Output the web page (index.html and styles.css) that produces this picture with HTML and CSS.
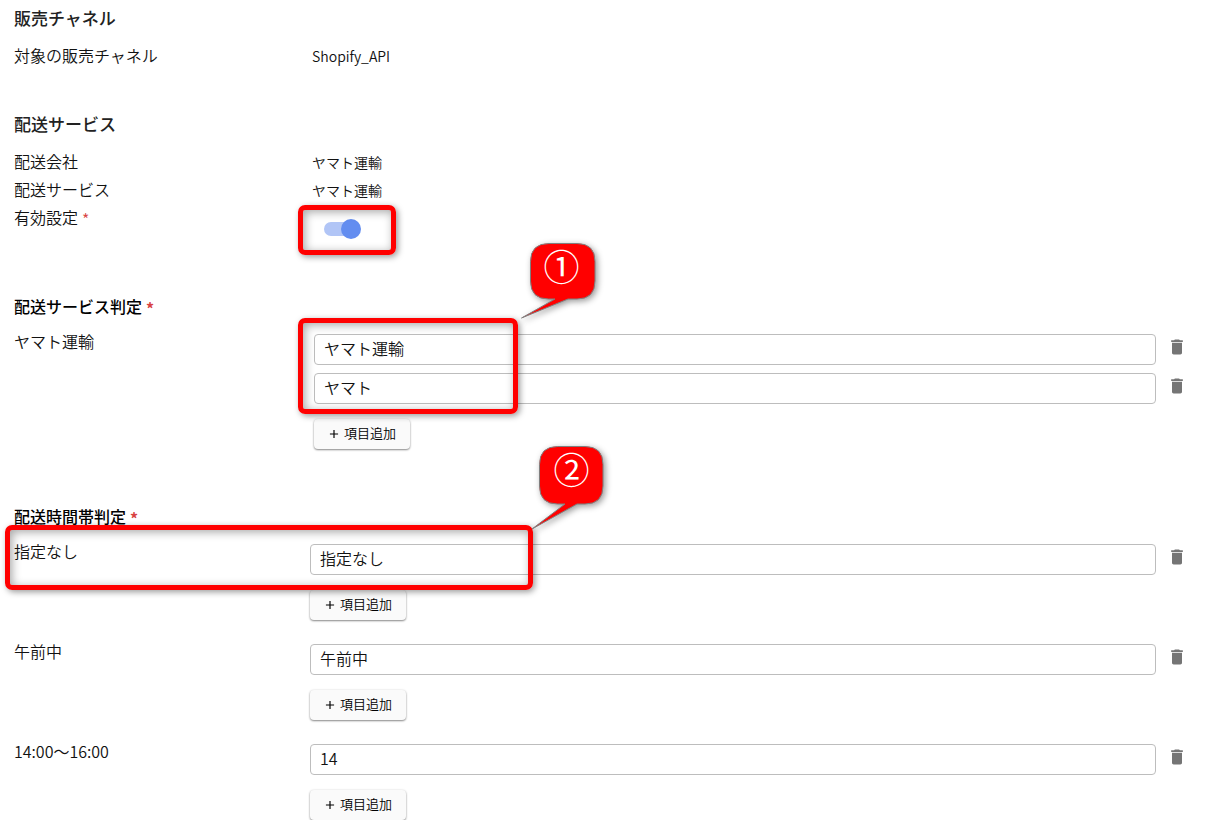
FILE: index.html
```html
<!DOCTYPE html>
<html lang="ja">
<head>
  <meta charset="UTF-8">
  <meta name="viewport" content="width=device-width, initial-scale=1.0">
  <title>配送サービス</title>
  <link rel="stylesheet" href="styles.css">
</head>
<body>
  <!-- Shared icons -->
  <svg class="sprite" aria-hidden="true">
    <symbol id="icon-delete" viewBox="0 0 24 24">
      <path d="M6 19c0 1.1.9 2 2 2h8c1.1 0 2-.9 2-2V7H6v12zM19 4h-3.5l-1-1h-5l-1 1H5v2h14V4z"/>
    </symbol>
    <symbol id="icon-add" viewBox="0 0 24 24">
      <path d="M19 13h-6v6h-2v-6H5v-2h6V5h2v6h6v2z"/>
    </symbol>
  </svg>

  <form class="settings">
    <section class="section">
      <h2>販売チャネル</h2>
      <div class="row">
        <span class="label">対象の販売チャネル</span>
        <span class="value">Shopify_API</span>
      </div>
    </section>

    <section class="section">
      <h2>配送サービス</h2>
      <div class="row">
        <span class="label">配送会社</span>
        <span class="value">ヤマト運輸</span>
      </div>
      <div class="row">
        <span class="label">配送サービス</span>
        <span class="value">ヤマト運輸</span>
      </div>
      <div class="row">
        <label class="label" for="enabled">有効設定<span class="required">*</span></label>
        <div class="switch-cell">
          <input type="checkbox" class="switch" id="enabled" checked>
          <div class="highlight highlight-switch"></div>
        </div>
      </div>
    </section>

    <section class="section section-rules">
      <h3>配送サービス判定<span class="required">*</span></h3>
      <div class="row">
        <label class="label" for="service1">ヤマト運輸</label>
        <div class="fields fields-indent">
          <div class="field">
            <input type="text" id="service1" value="ヤマト運輸">
            <button type="button" class="btn-delete" aria-label="削除"><svg><use href="#icon-delete"/></svg></button>
          </div>
          <div class="field">
            <input type="text" id="service2" aria-label="ヤマト運輸" value="ヤマト">
            <button type="button" class="btn-delete" aria-label="削除"><svg><use href="#icon-delete"/></svg></button>
          </div>
          <button type="button" class="btn-add"><svg><use href="#icon-add"/></svg><span>項目追加</span></button>
          <div class="highlight highlight-service"></div>
          <div class="callout callout-service">
            <svg viewBox="0 0 84 90">
              <path d="M29 2.5H57Q75 2.5 75 20.5V40Q75 58 57 58H48L1.5 77L35 58H28.5Q10.5 58 10.5 40V20.5Q10.5 2.5 29 2.5Z"/>
            </svg>
            <span class="callout-text">①</span>
          </div>
        </div>
      </div>
    </section>

    <section class="section section-rules">
      <h3>配送時間帯判定<span class="required">*</span></h3>
      <div class="row">
        <label class="label" for="time1">指定なし</label>
        <div class="fields">
          <div class="field">
            <input type="text" id="time1" value="指定なし">
            <button type="button" class="btn-delete" aria-label="削除"><svg><use href="#icon-delete"/></svg></button>
          </div>
          <button type="button" class="btn-add"><svg><use href="#icon-add"/></svg><span>項目追加</span></button>
        </div>
        <div class="highlight highlight-time"></div>
        <div class="callout callout-time">
          <svg viewBox="0 0 84 90">
            <path d="M27.5 2.5H55Q73 2.5 73 20.5V42Q73 60 55 60H47L2 85L35 60H27.5Q9.5 60 9.5 42V20.5Q9.5 2.5 27.5 2.5Z"/>
          </svg>
          <span class="callout-text">②</span>
        </div>
      </div>
      <div class="row">
        <label class="label" for="time2">午前中</label>
        <div class="fields">
          <div class="field">
            <input type="text" id="time2" value="午前中">
            <button type="button" class="btn-delete" aria-label="削除"><svg><use href="#icon-delete"/></svg></button>
          </div>
          <button type="button" class="btn-add"><svg><use href="#icon-add"/></svg><span>項目追加</span></button>
        </div>
      </div>
      <div class="row">
        <label class="label" for="time3">14:00～16:00</label>
        <div class="fields">
          <div class="field">
            <input type="text" id="time3" value="14">
            <button type="button" class="btn-delete" aria-label="削除"><svg><use href="#icon-delete"/></svg></button>
          </div>
          <button type="button" class="btn-add"><svg><use href="#icon-add"/></svg><span>項目追加</span></button>
        </div>
      </div>
    </section>
  </form>
</body>
</html>
```
FILE: styles.css
```css
* {
  box-sizing: border-box;
}
body {
  margin: 0;
  background-color: #fff;
  color: #111;
  font-family: "Noto Sans CJK JP", sans-serif;
  font-size: 16px;
  font-weight: 350;
}
.sprite {
  display: none;
}
.settings {
  padding: 6px 7px 0 14px;
}
.section {
  margin-bottom: 42px;
}
h2,
h3 {
  margin: 0 0 12px;
  line-height: 24px;
  font-weight: 500;
}
h2 {
  color: #222;
  font-size: 17px;
}
h3 {
  margin-bottom: 10px;
  color: #000;
  font-size: 16px;
}
.row {
  display: grid;
  grid-template-columns: 1fr 3fr;
  position: relative;
}
.label {
  line-height: 26px;
}
.value {
  padding-left: 2px;
  font-size: 14px;
  line-height: 28px;
}
.required {
  margin-left: 4px;
  color: #d84343;
  line-height: 1;
  vertical-align: -2px;
}
h3 .required {
  font-weight: 700;
}

/* Rule sections */
.section-rules {
  margin-bottom: 55px;
}
.section-rules:last-child {
  margin-bottom: 0;
}
.section-rules .row + .row {
  margin-top: 18px;
}
.fields {
  display: flex;
  flex-direction: column;
  align-items: flex-start;
  gap: 8px;
  padding-top: 6px;
}
.fields-indent {
  position: relative;
  padding-left: 4px;
}
.field {
  display: flex;
  align-items: flex-start;
  width: 100%;
}
.field input {
  flex: 1;
  min-width: 0;
  height: 31px;
  padding: 0 9px 4px;
  border: 1px solid #bdbdbd;
  border-radius: 4px;
  background-color: #fff;
  color: #111;
  font: inherit;
}
button {
  border: none;
  font: inherit;
  cursor: pointer;
}
.btn-delete {
  display: flex;
  align-items: center;
  justify-content: center;
  width: 42px;
  height: 26px;
  padding: 0;
  background: none;
}
.btn-delete svg {
  width: 20px;
  height: 20px;
  fill: #757575;
}
.btn-add {
  display: flex;
  align-items: center;
  gap: 3px;
  height: 30px;
  margin-top: 7px;
  padding: 0 14px 0 13px;
  border-radius: 4px;
  background-color: #fafafa;
  box-shadow: 0 1px 2px rgba(0, 0, 0, 0.45), 0 0 3px rgba(0, 0, 0, 0.08);
  color: #000;
  font-size: 13px;
}
.btn-add svg {
  width: 14px;
  height: 14px;
}
.btn-add span {
  padding-bottom: 4px;
}

/* Toggle switch */
.switch-cell {
  display: flex;
  align-items: center;
  position: relative;
  height: 48px;
  padding: 2px 0 0 14px;
}
.switch {
  appearance: none;
  position: relative;
  width: 37px;
  height: 20px;
  margin: 0;
  cursor: pointer;
}
.switch::before {
  content: "";
  position: absolute;
  top: 3px;
  left: 0;
  width: 34px;
  height: 14px;
  border-radius: 7px;
  background-color: #b1c5f6;
}
.switch::after {
  content: "";
  position: absolute;
  top: 0;
  left: 0;
  width: 20px;
  height: 20px;
  border-radius: 50%;
  background-color: #638df0;
}
.switch:checked::after {
  left: 17px;
}

/* Red frames and numbered callouts */
.highlight {
  position: absolute;
  border: 5px solid #f00;
  border-radius: 7px;
  box-shadow: 2px 2px 6px rgba(0, 0, 0, 0.4), inset 2px 2px 10px rgba(0, 0, 0, 0.35);
  pointer-events: none;
}
.highlight-switch {
  top: 1px;
  left: -12px;
  width: 98px;
  height: 50px;
}
.highlight-service {
  top: -10px;
  left: -12px;
  width: 220px;
  height: 96px;
}
.highlight-time {
  top: -13px;
  left: -9px;
  width: 528px;
  height: 65px;
}
.callout {
  position: absolute;
  width: 84px;
  height: 90px;
  pointer-events: none;
}
.callout svg {
  display: block;
  width: 84px;
  height: 90px;
  overflow: visible;
  fill: #f00;
  stroke: #7f7f7f;
  stroke-width: 1;
  filter: drop-shadow(2px 2px 3px rgba(0, 0, 0, 0.4));
}
.callout-text {
  position: absolute;
  top: 6px;
  left: 0;
  width: 83px;
  color: #fff;
  font-size: 36px;
  font-weight: 400;
  line-height: 36px;
  text-align: center;
}
.callout-service {
  top: -87px;
  left: 210px;
}
.callout-time {
  top: -94px;
  left: 516px;
}
```
